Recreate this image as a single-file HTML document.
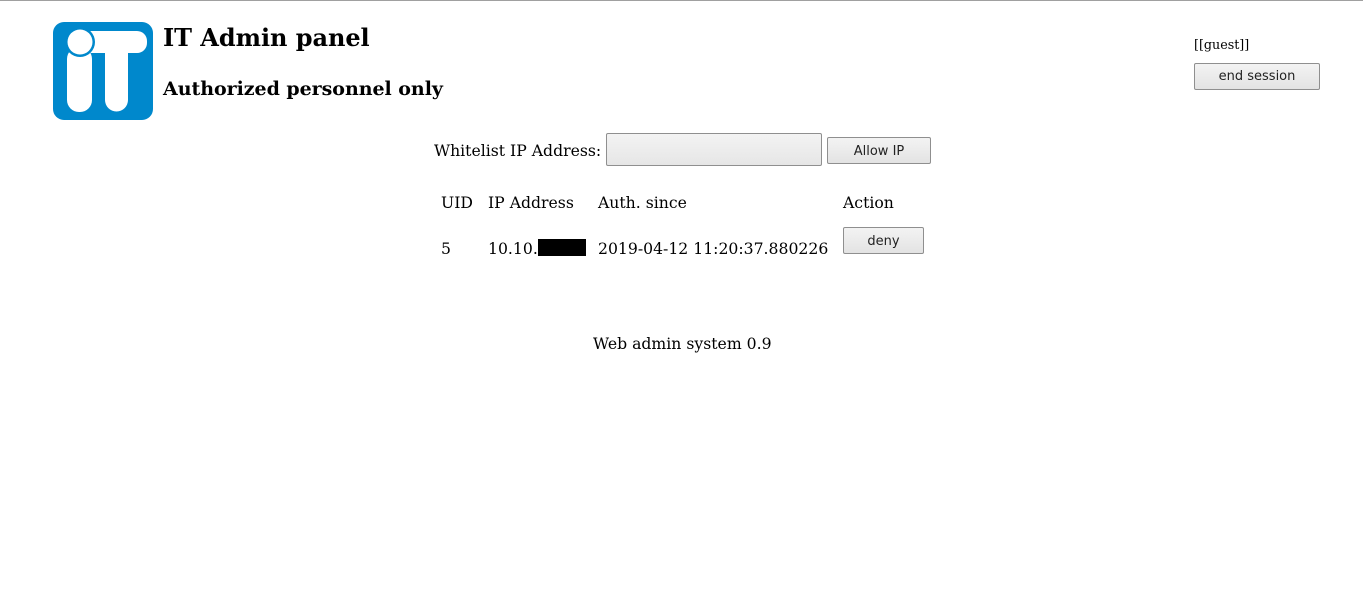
<!DOCTYPE html>
<html><head><style>
body{margin:0;width:1363px;height:611px;background:#fff;position:relative;font-family:"DejaVu Serif","Liberation Serif",serif;color:#000;overflow:hidden}
.a{position:absolute;white-space:nowrap}
.t{font-size:15.66px}
.btn{position:absolute;box-sizing:border-box;border:1px solid #8f8f8f;border-radius:2px;background:linear-gradient(#f3f3f3,#e3e3e3);font-family:"DejaVu Sans","Liberation Sans",sans-serif;font-size:13px;color:#222;text-align:center}
</style></head><body>
<div class="a" style="left:0;top:0;width:1363px;height:1px;background:#a0a0a0"></div>
<svg class="a" style="left:53px;top:21px" width="101" height="100" viewBox="0 0 101 100">
<rect x="0" y="1" width="100" height="98" rx="11" fill="#0088cc"/>
<rect x="14" y="26" width="25" height="65" rx="12" fill="#fff"/>
<path d="M37 10 H84 a10 10 0 0 1 10 10 v2 a10 10 0 0 1 -10 10 H75 V79 a11.5 11.5 0 0 1 -23 0 V32 H37 Z" fill="#fff"/>
<circle cx="27" cy="21" r="15" fill="#0088cc"/>
<circle cx="27" cy="21" r="12.5" fill="#fff"/>
</svg>
<div class="a" style="left:163px;top:23px;font-size:24px;font-weight:bold;letter-spacing:-0.05px">IT Admin panel</div>
<div class="a" style="left:163px;top:78px;font-size:19px;font-weight:bold;letter-spacing:-0.04px">Authorized personnel only</div>
<div class="a" style="left:1194px;top:37px;font-size:12.7px">[[guest]]</div>
<div class="btn" style="left:1194px;top:63px;width:126px;height:27px;line-height:26px">end session</div>
<div class="a t" style="left:434px;top:141px">Whitelist IP Address:</div>
<div class="a" style="left:606px;top:133px;width:216px;height:33px;box-sizing:border-box;border:1px solid #8f8f8f;border-radius:2px;background:linear-gradient(#f3f3f3,#e6e6e6)"></div>
<div class="btn" style="left:827px;top:137px;width:104px;height:27px;line-height:27px">Allow IP</div>
<div class="a t" style="left:441px;top:193px">UID</div>
<div class="a t" style="left:488px;top:193px">IP Address</div>
<div class="a t" style="left:598px;top:193px">Auth. since</div>
<div class="a t" style="left:843px;top:193px">Action</div>
<div class="a t" style="left:441px;top:239px">5</div>
<div class="a t" style="left:488px;top:239px">10.10.</div>
<div class="a" style="left:538px;top:239px;width:48px;height:17px;background:#000"></div>
<div class="a t" style="left:598px;top:239px">2019-04-12 11:20:37.880226</div>
<div class="btn" style="left:843px;top:227px;width:81px;height:27px;line-height:27px">deny</div>
<div class="a t" style="left:593px;top:334px">Web admin system 0.9</div>
</body></html>
